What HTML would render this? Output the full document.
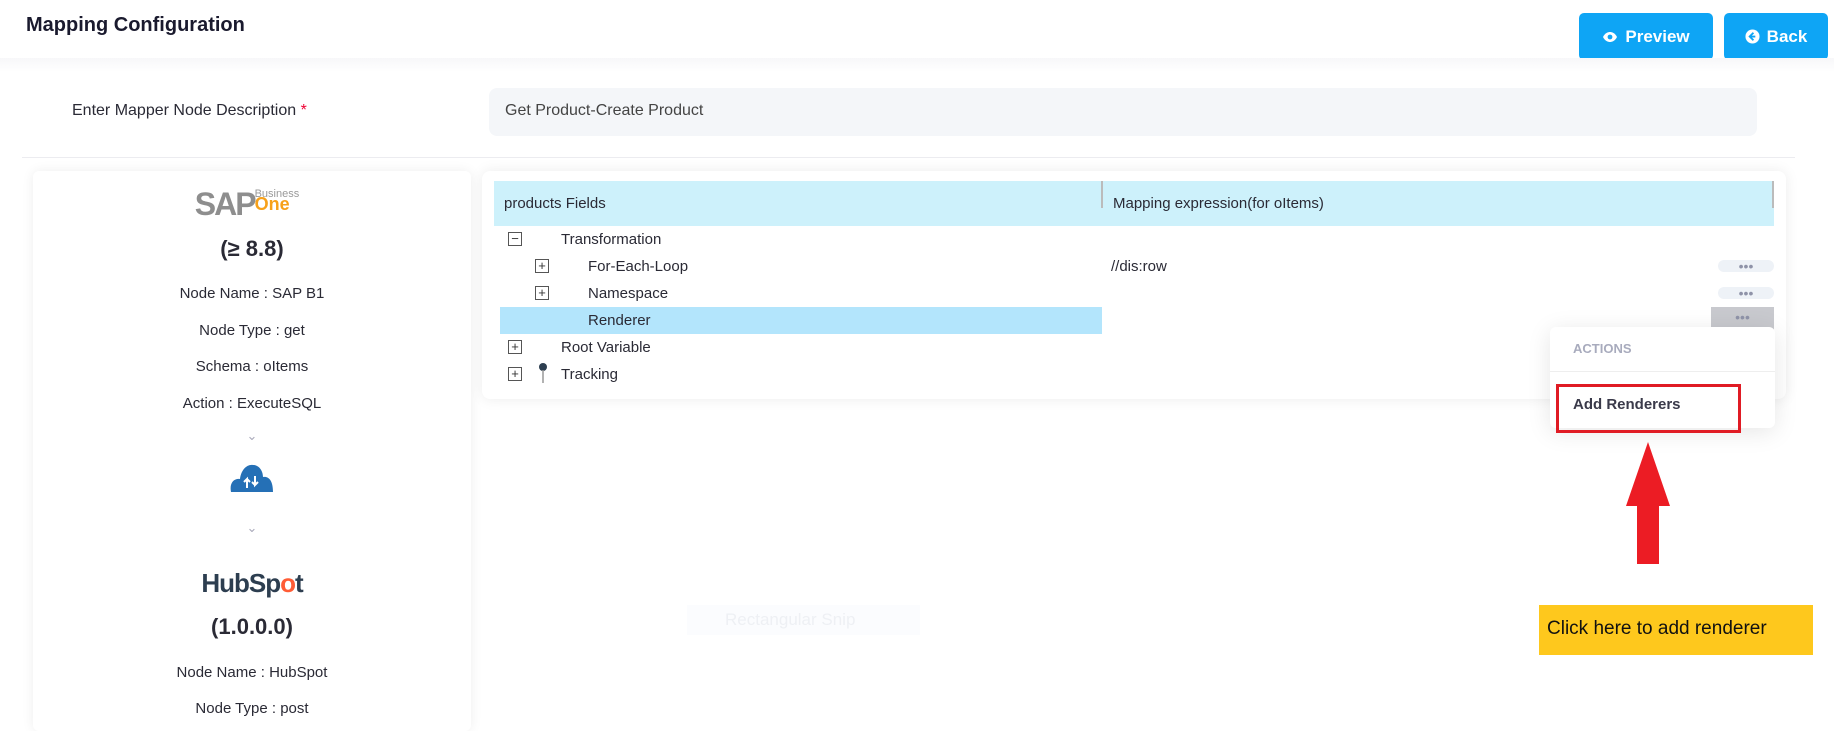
<!DOCTYPE html>
<html><head><meta charset="utf-8"><style>
*{box-sizing:border-box;margin:0;padding:0}
body{width:1834px;height:719px;overflow:hidden;background:#fff;font-family:"Liberation Sans",sans-serif;color:#2a2a35;position:relative}
.a{position:absolute}
.btn{position:absolute;top:13px;height:47px;background:#0ea5f5;color:#fff;border-radius:5px;font-weight:bold;font-size:17px;display:flex;align-items:center;justify-content:center;gap:7px}
.c{position:absolute;left:33px;width:438px;text-align:center;font-size:15px;color:#2a2a35}
.row{position:absolute;font-size:15px;color:#2a2a35}
.box{position:absolute;width:14px;height:14px;border:1px solid #555;font-size:13px;line-height:11px;text-align:center;color:#333}
.pill{position:absolute;left:1718px;width:56px;height:12px;border-radius:6px;background:#eef2f7;color:#8f93a8;font-size:14px;text-align:center;line-height:12px;letter-spacing:0}
</style></head><body>
<div class="a" style="left:26px;top:14px;font-size:20px;font-weight:bold;color:#1a1a2e">Mapping Configuration</div>
<div class="btn" style="left:1579px;width:134px"><svg width="16" height="12" viewBox="0 0 16 12"><path d="M1 6C3 2 6 1 8 1s5 1 7 5c-2 4-5 5-7 5S3 10 1 6z" fill="#fff"/><circle cx="8" cy="6" r="2.4" fill="#0ea5f5"/></svg>Preview</div>
<div class="btn" style="left:1724px;width:104px"><svg width="15" height="15" viewBox="0 0 16 16"><circle cx="8" cy="8" r="7.5" fill="#fff"/><path d="M9 4L5 8l4 4M5 8h6" stroke="#0ea5f5" stroke-width="2" fill="none"/></svg>Back</div>
<div class="a" style="left:0;top:58px;width:1834px;height:14px;background:linear-gradient(#f7f7f9,#fff)"></div>
<div class="a" style="left:72px;top:102px;font-size:16px;color:#2a2a35">Enter Mapper Node Description <span style="color:#e03">*</span></div>
<div class="a" style="left:489px;top:88px;width:1268px;height:48px;background:#f4f6f9;border-radius:8px;padding:14px 16px;font-size:16px;color:#444">Get Product-Create Product</div>
<div class="a" style="left:22px;top:157px;width:1773px;height:1px;background:#ececf0"></div>
<div class="a" style="left:33px;top:171px;width:438px;height:560px;background:#fff;border-radius:6px;box-shadow:0 0 12px rgba(0,0,0,.07)"></div>
<div class="c" style="top:186px;font-size:32px;font-weight:bold;letter-spacing:-2px;color:#8e8e8e"><span style="margin-left:-10px">SAP</span><span style="display:inline-block;font-size:11px;letter-spacing:0;line-height:10px;vertical-align:top;margin-top:3px;text-align:left;font-weight:normal"><span style="color:#999">Business</span><br><b style="color:#f7a11a;font-size:18px">One</b></span></div>
<div class="c" style="top:236px;font-size:22px;font-weight:bold">(≥ 8.8)</div>
<div class="c" style="top:285px">Node Name : SAP B1</div>
<div class="c" style="top:322px">Node Type : get</div>
<div class="c" style="top:358px">Schema : oItems</div>
<div class="c" style="top:395px">Action : ExecuteSQL</div>
<div class="c" style="top:428px;color:#aab;font-size:13px">&#8964;</div>
<svg class="a" style="left:229px;top:464px" width="46" height="30" viewBox="0 0 46 30"><path d="M2 28C0 18 6 14 11 15 12 6 18 0 24 1c6 0 10 6 10 12 6-1 10 4 10 15z" fill="#2570b6"/><path d="M18 24v-9l-3 3M18 15l3 3M26 12v9l3-3M26 21l-3-3" stroke="#fff" stroke-width="2" fill="none"/></svg>
<div class="c" style="top:520px;color:#aab;font-size:13px">&#8964;</div>
<div class="c" style="top:568px;font-size:26px;font-weight:bold;letter-spacing:-1px;color:#2d3e50">HubSp<span style="color:#ff5c35">o</span>t</div>
<div class="c" style="top:614px;font-size:22px;font-weight:bold">(1.0.0.0)</div>
<div class="c" style="top:664px">Node Name : HubSpot</div>
<div class="c" style="top:700px">Node Type : post</div>

<div class="a" style="left:482px;top:171px;width:1304px;height:228px;background:#fff;border-radius:8px;box-shadow:0 0 14px rgba(0,0,0,.08)"></div>
<div class="a" style="left:494px;top:181px;width:1280px;height:45px;background:#cdf1fb"></div>
<div class="a" style="left:1101px;top:181px;width:2px;height:27px;background:#bbb"></div>
<div class="a" style="left:1772px;top:181px;width:2px;height:27px;background:#bbb"></div>
<div class="row" style="left:504px;top:195px">products Fields</div>
<div class="row" style="left:1113px;top:195px">Mapping expression(for oItems)</div>
<div class="a" style="left:500px;top:307px;width:602px;height:27px;background:#b3e5fc"></div>
<div class="box" style="left:508px;top:232px">−</div><div class="row" style="left:561px;top:231px">Transformation</div>
<div class="box" style="left:535px;top:259px">+</div><div class="row" style="left:588px;top:258px">For-Each-Loop</div>
<div class="box" style="left:535px;top:286px">+</div><div class="row" style="left:588px;top:285px">Namespace</div>
<div class="row" style="left:588px;top:312px">Renderer</div>
<div class="box" style="left:508px;top:340px">+</div><div class="row" style="left:561px;top:339px">Root Variable</div>
<div class="box" style="left:508px;top:367px">+</div><div class="row" style="left:561px;top:366px">Tracking</div>
<svg class="a" style="left:538px;top:362px" width="10" height="22"><circle cx="5" cy="5" r="4" fill="#2d3e50"/><path d="M5 8v13" stroke="#999" stroke-width="1.5"/></svg>
<div class="row" style="left:1111px;top:258px">//dis:row</div>
<div class="pill" style="top:260px">•••</div>
<div class="pill" style="top:287px">•••</div>
<div class="a" style="left:1711px;top:307px;width:63px;height:27px;background:#c8c9ce;color:#8f93a8;font-size:14px;text-align:center;line-height:20px">•••</div>

<div class="a" style="left:1550px;top:327px;width:225px;height:101px;background:#fff;border-radius:6px;box-shadow:0 4px 24px rgba(0,0,0,.1)"></div>
<div class="a" style="left:1573px;top:341px;font-size:13px;font-weight:bold;color:#a8abbd">ACTIONS</div>
<div class="a" style="left:1550px;top:371px;width:225px;height:1px;background:#eee"></div>
<div class="a" style="left:1556px;top:384px;width:185px;height:49px;border:3px solid #e01b24"></div>
<div class="a" style="left:1573px;top:396px;font-size:15px;font-weight:bold;color:#3a3a4a">Add Renderers</div>
<svg class="a" style="left:1622px;top:440px" width="52" height="126"><path d="M26 2L48 66H37V124H15V66H4z" fill="#ec1c24"/></svg>
<div class="a" style="left:1539px;top:605px;width:274px;height:50px;background:#fec81d;font-size:19px;color:#111;padding:13px 8px">Click here to add renderer</div>
<div class="a" style="left:687px;top:605px;width:233px;height:30px;background:#fbfcfe;color:#eef0f4;font-size:17px;padding:5px 38px">Rectangular Snip</div>
</body></html>
